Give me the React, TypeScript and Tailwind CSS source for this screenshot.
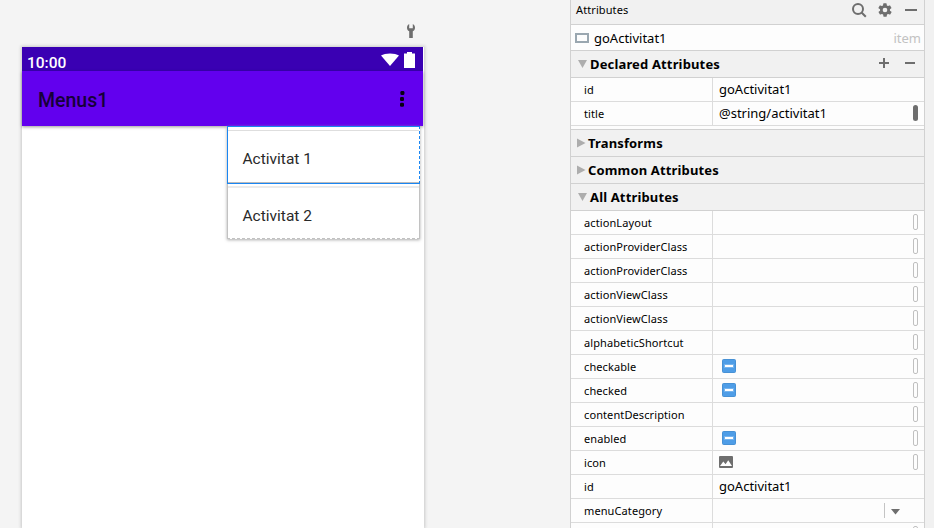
import React from "react";

const attributes: { name: string; kind?: string }[] = [
  { name: "actionLayout" },
  { name: "actionProviderClass" },
  { name: "actionProviderClass" },
  { name: "actionViewClass" },
  { name: "actionViewClass" },
  { name: "alphabeticShortcut" },
  { name: "checkable", kind: "check" },
  { name: "checked", kind: "check" },
  { name: "contentDescription" },
  { name: "enabled", kind: "check" },
  { name: "icon", kind: "image" },
  { name: "id", kind: "text" },
  { name: "menuCategory", kind: "select" },
  { name: "" },
];

function Section({ title, open, children }: { title: string; open?: boolean; children?: React.ReactNode }) {
  return (
    <div className="flex h-[27px] shrink-0 items-center border-b border-[#d1d1d1] bg-[#f1f1f1]">
      <svg className={open ? "ml-[7px] h-[10px] w-[9px]" : "ml-[6px] h-[10px] w-[9px]"} viewBox="0 0 9 10">
        <path d={open ? "M0 1h9L4.5 9z" : "M0 .5v9L8.5 5z"} fill="#adadad" />
      </svg>
      <span className={open ? "ml-[3px] text-[13px] leading-[18px] font-bold tracking-[0.15px]" : "ml-[2px] text-[13px] leading-[18px] font-bold tracking-[0.15px]"}>{title}</span>
      <div className="ml-auto flex">{children}</div>
    </div>
  );
}

function Minus() {
  return <svg width="12" height="12"><path d="M1 5h10v2H1z" fill="#6e6e6e" /></svg>;
}

function Row({ name, children, pill }: { name: string; children?: React.ReactNode; pill?: "solid" | "outline" }) {
  return (
    <div className="flex h-6 shrink-0 border-b border-[#dcdcdc]">
      <div className="flex w-[142px] shrink-0 items-center border-r border-[#dcdcdc] pt-px pl-[13px] text-[11px] tracking-[0.1px]">{name}</div>
      <div className="flex flex-1 items-center pl-[6px] text-[13px]">{children}</div>
      {pill === "outline" && <div className="mt-[3px] mr-[6px] h-4 w-[5px] rounded-[2px] border border-[#c0c0c0]" />}
      {pill === "solid" && <div className="mt-[3px] mr-[6px] h-4 w-[5px] rounded-[2.5px] bg-[#6e6e6e]" />}
    </div>
  );
}

function Value({ kind }: { kind?: string }) {
  if (kind === "check")
    return (
      <div className="mb-px ml-[3px] flex h-[14px] w-[14px] items-center justify-center rounded-[1.5px] border border-[#4791d5] bg-[#4e9de7]">
        <div className="h-[2px] w-2 bg-white outline outline-[#8fc2f1]/60" />
      </div>
    );
  if (kind === "image")
    return (
      <svg className="mb-px" width="14" height="12">
        <rect width="14" height="12" rx="1" fill="#6e6e6e" />
        <path d="M1 10L4.3 5.5 6.6 8.3 9.2 4.3 13 10z" fill="#fff" />
      </svg>
    );
  if (kind === "text") return <>goActivitat1</>;
  if (kind === "select")
    return (
      <div className="mr-[19px] ml-auto flex h-[15px] w-[21px] items-center border-l border-[#c4c4c4]">
        <svg className="mt-[2px] ml-[6px]" width="9" height="6"><path d="M0 0h9L4.5 5.5z" fill="#6e6e6e" /></svg>
      </div>
    );
  return null;
}

function Preview() {
  return (
    <main className="flex w-[570px] shrink-0 flex-col pl-[22px]">
      <div className="flex h-[47px] shrink-0 pt-6 pl-[384px]">
        <svg width="10" height="14" viewBox="0 0 10 14">
          <path d="M3.2 0v4.3h3.6V0C8.3.8 9 2 9 3.7c0 1.8-.9 2.9-2.2 3.5V14H3.2V7.2C1.9 6.6 1 5.5 1 3.7 1 2 1.7.8 3.2 0z" fill="#6e6e6e" />
        </svg>
      </div>
      <div className="flex w-[402px] flex-1 flex-col bg-white font-[Roboto,sans-serif] shadow-[0_0_3px_1px_#c9c9c9]">
        <div className="flex h-6 w-[401px] shrink-0 bg-[#3a00b3] text-white">
          <span className="mt-[7px] ml-[5px] text-[15.5px] leading-[18px] font-medium">10:00</span>
          <svg className="mt-[6px] ml-auto" width="18" height="13" viewBox="0 0 18 13"><path d="M0 2.5C4-.2 14-.2 18 2.5L9 13z" fill="#fff" /></svg>
          <svg className="mt-[5px] mr-2 ml-[5px]" width="11" height="16"><path d="M0 1.5h3V0h5v1.5h3V16H0z" fill="#fff" /></svg>
        </div>
        <div className="z-10 flex h-[55px] w-[401px] shrink-0 items-center bg-[#6200ee] pr-[18px] pl-4 text-[#170039] shadow-[0_1px_3px_rgba(0,0,0,0.4)]">
          <span className="mt-[4px] text-[19.5px] leading-6 font-medium">Menus1</span>
          <svg className="mt-px ml-auto" width="6" height="18"><g fill="#080012"><rect x="1.4" y="1" width="4" height="4" rx="1.3" /><rect x="1" y="7" width="4" height="4" rx="1.3" /><rect x="1" y="12.8" width="4" height="4" rx="1.3" /></g></svg>
        </div>
        <div className="z-20 ml-[205px] flex w-[193px] flex-col bg-white text-[15.5px] text-[#292929] shadow-[0_1px_3px_#aaa]">
          <div className="flex h-[58px] flex-col border border-[#1a86f2] [border-right-style:dashed]">
            <div className="mt-[3px] h-px bg-[#dedede]" />
            <div className="flex flex-1 items-center border-b border-[#bbb] pt-[6px] pl-[14.5px]">Activitat 1</div>
          </div>
          <div className="flex h-[55px] flex-col border-x border-b border-[#c2c2c2] [border-bottom-style:dashed]">
            <div className="mt-[2px] h-[2px] bg-[#ebebeb]" />
            <div className="flex flex-1 items-center pt-[7px] pl-[14.5px]">Activitat 2</div>
          </div>
        </div>
      </div>
    </main>
  );
}

export default function App() {
  return (
    <div className="flex h-[528px] w-[934px] overflow-hidden bg-[#f4f4f4]">
      <Preview />
      <aside className="flex w-[355px] shrink-0 flex-col overflow-hidden border-x border-[#d1d1d1] bg-[#fdfdfd] font-['Noto_Sans',sans-serif] text-black">
        <header className="flex h-[25px] shrink-0 border-b border-[#d1d1d1] bg-[#f1f1f1] pr-[7px]">
          <span className="mt-[2px] ml-[5px] text-[11px] leading-4 tracking-[0.1px]">Attributes</span>
          <svg className="mt-[2px] ml-auto" width="16" height="16" fill="none" stroke="#6e6e6e" strokeWidth="2"><circle cx="7" cy="7" r="5" /><path d="M10.5 10.5l4.3 4.3" /></svg>
          <svg className="mt-[2px] ml-[10px]" width="16" height="16" viewBox="0 0 24 24" fill="#6e6e6e"><path d="M19.4 13a7.5 7.5 0 000-2l2.1-1.6a.5.5 0 00.1-.6l-2-3.5a.5.5 0 00-.6-.2l-2.5 1a7.3 7.3 0 00-1.7-1l-.4-2.6a.5.5 0 00-.5-.5h-4a.5.5 0 00-.5.5L9 5.1a7.3 7.3 0 00-1.7 1l-2.5-1a.5.5 0 00-.6.2l-2 3.5a.5.5 0 00.1.6L4.6 11a7.5 7.5 0 000 2l-2.1 1.6a.5.5 0 00-.1.6l2 3.5c.1.2.4.3.6.2l2.5-1a7.3 7.3 0 001.7 1l.4 2.6c0 .3.2.5.5.5h4c.3 0 .5-.2.5-.5l.4-2.6a7.3 7.3 0 001.7-1l2.5 1c.2.1.5 0 .6-.2l2-3.5a.5.5 0 00-.1-.6zM12 15.5a3.5 3.5 0 110-7 3.5 3.5 0 010 7z" /></svg>
          <svg className="mt-[9px] ml-3" width="12" height="2"><path d="M0 0h12v2H0z" fill="#6e6e6e" /></svg>
        </header>
        <div className="flex h-[26px] shrink-0 items-center border-b border-[#d1d1d1] pr-[3px] pl-1 text-[13px]">
          <div className="h-[10px] w-[14px] border-2 border-[#9aa7b0]" />
          <span className="mt-[2px] ml-[5px]">goActivitat1</span>
          <span className="mt-[2px] ml-auto text-[#c2c2c2]">item</span>
        </div>
        <Section title="Declared Attributes" open>
          <div className="mr-2 mb-[3px] flex gap-[14px]">
            <svg width="12" height="12"><path d="M1 5h10v2H1zM5 1h2v10H5z" fill="#6e6e6e" /></svg>
            <Minus />
          </div>
        </Section>
        <Row name="id">goActivitat1</Row>
        <Row name="title" pill="solid">@string/activitat1</Row>
        <div className="h-1 shrink-0 border-b border-[#d1d1d1]" />
        <Section title="Transforms" />
        <Section title="Common Attributes" />
        <Section title="All Attributes" open />
        {attributes.map((a, i) => (
          <Row key={i} name={a.name} pill={a.kind === "text" || a.kind === "select" ? undefined : "outline"}>
            <Value kind={a.kind} />
          </Row>
        ))}
      </aside>
      <div className="flex-1 bg-[#f1f1f1]" />
    </div>
  );
}
